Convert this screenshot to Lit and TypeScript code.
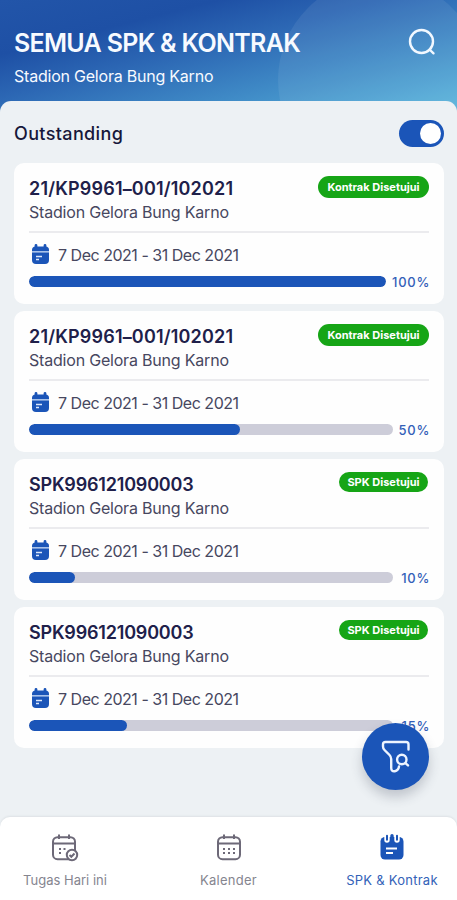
import { LitElement, html, css, svg } from "lit";
import { customElement, property } from "lit/decorators.js";
import { classMap } from "lit/directives/class-map.js";

interface Contract {
  code: string;
  kind: "kontrak" | "spk";
  fill: number;
  percent: number;
}

const contracts: Contract[] = [
  { code: "21/KP9961–001/102021", kind: "kontrak", fill: 100, percent: 100 },
  { code: "21/KP9961–001/102021", kind: "kontrak", fill: 58, percent: 50 },
  { code: "SPK996121090003", kind: "spk", fill: 12.5, percent: 10 },
  { code: "SPK996121090003", kind: "spk", fill: 27, percent: 15 },
];

const calendarOutline = svg`
  <rect x="2" y="4.200" width="22" height="22" rx="4.500"/>
  <path d="M2 10.500h22M8 1.600v4.400M18 1.600v4.400"/>`;

@customElement("contract-card")
export class ContractCard extends LitElement {
  @property({ attribute: false }) item!: Contract;

  static styles = css`
    :host {
      display: block;
      box-sizing: border-box;
      height: 141px;
      padding: 13px 15px 0 15px;
      border-radius: 10px;
      background: #fefefe;
    }
    .head {
      display: flex;
      justify-content: space-between;
      height: 57px;
      border-bottom: 2px solid #ebebee;
      box-sizing: border-box;
    }
    .code {
      font-size: 18px;
      line-height: 25px;
      font-weight: 600;
      color: #20204a;
      white-space: nowrap;
    }
    .kontrak .code { letter-spacing: 0.18px; }
    .spk .code { letter-spacing: -0.2px; }
    .place {
      font-size: 16px;
      line-height: 22px;
      letter-spacing: -0.2px;
      color: #47475f;
      white-space: nowrap;
    }
    .badge {
      box-sizing: border-box;
      width: 111px;
      height: 22px;
      border-radius: 11px;
      background: #16a516;
      color: #fff;
      font-size: 11px;
      line-height: 22px;
      font-weight: 700;
      text-align: center;
      white-space: nowrap;
    }
    .spk .badge { width: 89px; height: 20px; line-height: 20px; margin-right: 1px; }
    .date {
      display: flex;
      align-items: center;
      gap: 8px;
      height: 43px;
      padding-left: 2px;
      font-size: 16px;
      letter-spacing: -0.48px;
      color: #47475f;
    }
    .date svg { display: block; width: 19px; height: 21px; }
    .progress { display: flex; align-items: center; gap: 6px; height: 11px; }
    .track {
      flex: 1;
      height: 11px;
      border-radius: 6px;
      background: #cdcdd9;
      overflow: hidden;
    }
    .bar { height: 100%; border-radius: 6px; background: #1b55b8; }
    .percent {
      min-width: 31px;
      margin-right: -1px;
      text-align: right;
      font-size: 13px;
      line-height: 16px;
      font-weight: 500;
      letter-spacing: 0.7px;
      color: #3360b8;
    }
  `;

  render() {
    const { code, kind, fill, percent } = this.item;
    return html`
      <div class=${kind}>
        <div class="head">
          <div>
            <div class="code">${code}</div>
            <div class="place">Stadion Gelora Bung Karno</div>
          </div>
          <div class="badge">${kind === "spk" ? "SPK Disetujui" : "Kontrak Disetujui"}</div>
        </div>
        <div class="date">
          <svg viewBox="0 0 19 21">
            <path d="M5 1.500v3M14 1.500v3" stroke="#1b55b8" stroke-width="2.800" stroke-linecap="round"/>
            <path d="M1 7V6q0-3.500 3.500-3.500h10Q18 2.500 18 6v1z" fill="#1b55b8"/>
            <path d="M1 7h17v1.600H1z" fill="#a9c3ea"/>
            <path d="M1 8.600h17V16q0 4-4 4H5q-4 0-4-4z" fill="#1b55b8"/>
            <path d="M5 12.500h6M5 15.500h3" stroke="#dce8fa" stroke-width="1.500"/>
          </svg>
          <span class="period">7 Dec 2021 - 31 Dec 2021</span>
        </div>
        <div class="progress">
          <div class="track"><div class="bar" style="width:${fill}%"></div></div>
          <span class="percent">${percent}%</span>
        </div>
      </div>
    `;
  }
}

@customElement("app-root")
export class AppRoot extends LitElement {
  static styles = css`
    :host {
      display: flex;
      flex-direction: column;
      position: relative;
      width: 100%;
      height: 900px;
      overflow: hidden;
      background: #edf1f4;
      font-family: Inter, "Noto Sans", sans-serif;
    }
    .header {
      position: relative;
      display: flex;
      justify-content: space-between;
      box-sizing: border-box;
      flex: none;
      height: 114px;
      padding: 28px 21px 0 14px;
      overflow: hidden;
      color: #f7faff;
      background: linear-gradient(to bottom right, #2255a9 0%, #1e50a5 24%, #2c67b4 43%, #3f8ac6 68%, #55afd9 94%);
    }
    .glow {
      position: absolute;
      left: 278px;
      top: -22px;
      width: 204px;
      height: 204px;
      border-radius: 50%;
      background: rgba(255, 255, 255, 0.07);
    }
    .title {
      font-size: 25px;
      line-height: 30px;
      font-weight: 600;
      letter-spacing: -0.7px;
      white-space: nowrap;
    }
    .subtitle { margin-top: 8px; font-size: 16px; line-height: 20px; letter-spacing: -0.22px; }
    .search { position: relative; width: 28px; height: 28px; }
    .body {
      flex: 1;
      position: relative;
      margin-top: -13px;
      padding: 0 13px 0 14px;
      border-radius: 11px 11px 0 0;
      background: #edf1f4;
    }
    .filter {
      display: flex;
      align-items: center;
      justify-content: space-between;
      height: 62px;
      padding-top: 2px;
      box-sizing: border-box;
      font-size: 18px;
      font-weight: 500;
      letter-spacing: 0.36px;
      color: #17173a;
    }
    .toggle {
      display: flex;
      justify-content: flex-end;
      box-sizing: border-box;
      width: 45px;
      height: 27px;
      padding: 3px;
      border-radius: 14px;
      background: #1b55b8;
    }
    .knob { width: 21px; height: 21px; border-radius: 50%; background: #fff; }
    .list { display: flex; flex-direction: column; gap: 7px; }
    .fab {
      position: absolute;
      left: 362px;
      top: 723px;
      width: 67px;
      height: 67px;
      display: flex;
      align-items: center;
      justify-content: center;
      border-radius: 50%;
      background: #1b55b8;
      box-shadow: 0 7px 12px rgba(50, 60, 80, 0.24);
    }
    .nav {
      display: grid;
      grid-template-columns: 130px 197px 130px;
      position: relative;
      flex: none;
      height: 83px;
      border-radius: 10px 10px 0 0;
      background: #fff;
      box-shadow: 0 -1px 2px rgba(40, 50, 70, 0.08);
    }
    .tab {
      display: flex;
      flex-direction: column;
      align-items: center;
      padding-top: 16px;
      gap: 8px;
      font-size: 13px;
      line-height: 18px;
      color: #85858f;
      white-space: nowrap;
    }
    .tab:nth-child(n + 2) .label { letter-spacing: 0.25px; }
    .tab svg { width: 28px; height: 30px; fill: none; stroke: #6d6978; stroke-width: 2; }
    .active { color: #3362b8; }
  `;

  private tab(label: string, icon: unknown, active = false) {
    return html`<div class=${classMap({ tab: true, active })}>
      <svg viewBox="0 0 28 30">${icon}</svg><span class="label">${label}</span>
    </div>`;
  }

  render() {
    return html`
      <div class="header">
        <div class="glow"></div>
        <div>
          <div class="title">SEMUA SPK &amp; KONTRAK</div>
          <div class="subtitle">Stadion Gelora Bung Karno</div>
        </div>
        <svg class="search" viewBox="0 0 28 28" fill="none" stroke="#f2f8ff" stroke-width="2.400">
          <circle cx="13.500" cy="13.500" r="11.500"/>
          <path d="m21.500 21.500 4 3.800" stroke-linecap="round"/>
        </svg>
      </div>
      <div class="body">
        <div class="filter">
          <span class="outstanding">Outstanding</span>
          <div class="toggle"><div class="knob"></div></div>
        </div>
        <div class="list">
          ${contracts.map((c) => html`<contract-card .item=${c}></contract-card>`)}
        </div>
      </div>
      <div class="nav">
        ${this.tab("Tugas Hari ini", svg`${calendarOutline}
          <path d="M8 16h2M12.500 16h2M8 20h2" />
          <circle cx="21" cy="22" r="5.200" fill="#fff"/>
          <path d="m18.500 22 1.800 1.800 3.200-3.300"/>`)}
        ${this.tab("Kalender", svg`<g transform="translate(1 0)">${calendarOutline}
          <path d="M7 16h2M12 16h2M17 16h2M7 20h2M12 20h2M17 20h2"/></g>`)}
        ${this.tab("SPK & Kontrak", svg`
          <rect x="2.500" y="4" width="23" height="22.500" rx="4.500" fill="#1b55b8" stroke="none"/>
          <path d="M9 2v5M19 2v5" stroke="#fff" stroke-width="5.400" stroke-linecap="round"/>
          <path d="M9 2.800v4M19 2.800v4" stroke="#1b55b8" stroke-width="2" stroke-linecap="round"/>
          <path d="M14 2.800v4" stroke="#1b55b8" stroke-width="3.400" stroke-linecap="round"/>
          <path d="M8 15.500h11M8 20h7" stroke="#fff" stroke-width="2"/>`, true)}
      </div>
      <div class="fab">
        <svg width="30" height="34" viewBox="0 0 30 34" fill="none" stroke="#edf4ff" stroke-width="2.400" stroke-linecap="round" stroke-linejoin="round">
          <path d="M27.500 9.500V4.500Q27.500 2 25 2H4.500Q2 2 2 4.500v2Q2 8.500 3.500 10l5 5q1.700 1.700 1.700 4v9q0 3.700 3.600 3.200 3.600-.7 4.200-4.700"/>
          <circle cx="20.800" cy="19.500" r="4.700"/>
          <path d="m24.400 23.100 2.600 2.300"/>
        </svg>
      </div>
    `;
  }
}
